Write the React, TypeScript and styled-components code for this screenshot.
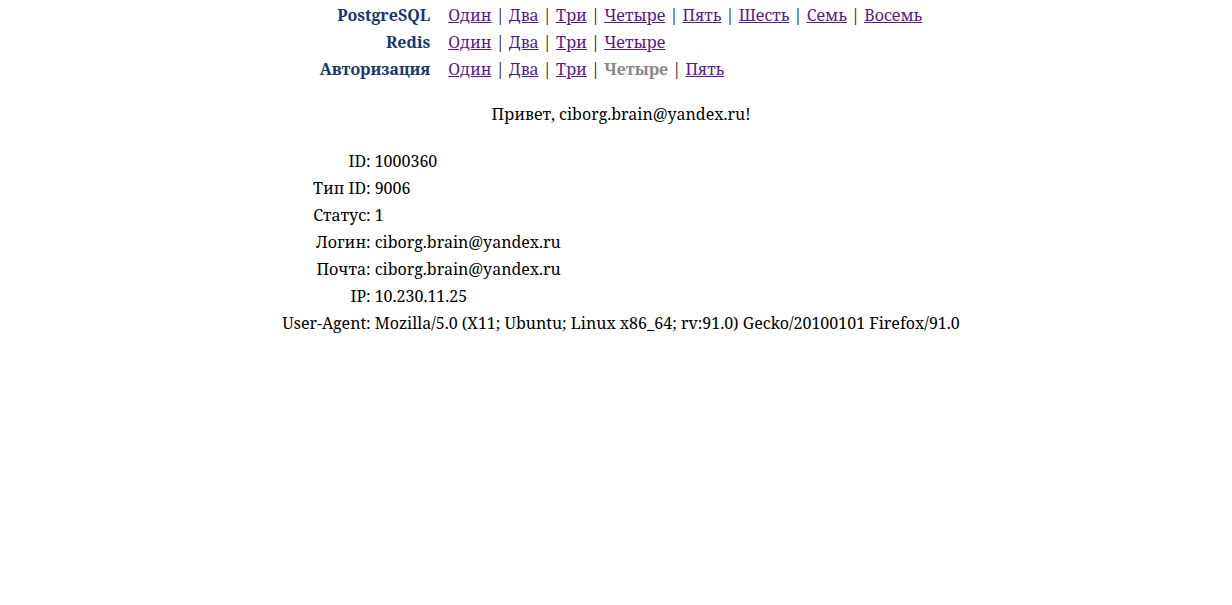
import { Fragment } from 'react'
import styled, { createGlobalStyle } from 'styled-components'

// ── Global ─────────────────────────────────────────────────────────────────────

const GlobalStyle = createGlobalStyle`
  html, body {
    margin: 0;
    padding: 0;
    background: #ffffff;
  }
  body {
    font-family: "Noto Serif", "DejaVu Serif", "Liberation Serif", serif;
    font-size: 16px;
    color: #000000;
  }
`

const Page = styled.div`
  padding: 1px 0 0 10px;
  display: flex;
  flex-direction: column;
  align-items: center;
`

// ── Nav ────────────────────────────────────────────────────────────────────────

const NavGrid = styled.div`
  display: grid;
  grid-template-columns: auto auto;
  column-gap: 18px;
  grid-auto-rows: 27px;
  align-items: center;
`

const NavLabel = styled.div`
  text-align: right;
  font-weight: bold;
  color: #18366f;
`

const NavLinks = styled.div`
  white-space: nowrap;
`

const NavLink = styled.a`
  color: #551a8b;
  text-decoration: underline;
`

const Current = styled.span`
  color: #888888;
  font-weight: bold;
`

const Sep = styled.span`
  color: #222222;
  padding: 0 4.2px;
`

// ── Greeting ───────────────────────────────────────────────────────────────────

const Greeting = styled.p`
  margin: 19px 0 19px;
  line-height: 27px;
  text-align: center;
`

// ── Info ───────────────────────────────────────────────────────────────────────

const InfoGrid = styled.div`
  display: grid;
  grid-template-columns: auto auto;
  column-gap: 4px;
  grid-auto-rows: 27px;
  align-items: center;
`

const InfoLabel = styled.div`
  text-align: right;
`

const InfoValue = styled.div`
  white-space: nowrap;
`

// ── Data ───────────────────────────────────────────────────────────────────────

const NAV = [
  { label: 'PostgreSQL', links: ['Один', 'Два', 'Три', 'Четыре', 'Пять', 'Шесть', 'Семь', 'Восемь'], current: -1 },
  { label: 'Redis', links: ['Один', 'Два', 'Три', 'Четыре'], current: -1 },
  { label: 'Авторизация', links: ['Один', 'Два', 'Три', 'Четыре', 'Пять'], current: 3 },
]

const INFO = [
  ['ID:', '1000360'],
  ['Тип ID:', '9006'],
  ['Статус:', '1'],
  ['Логин:', 'ciborg.brain@yandex.ru'],
  ['Почта:', 'ciborg.brain@yandex.ru'],
  ['IP:', '10.230.11.25'],
  ['User-Agent:', 'Mozilla/5.0 (X11; Ubuntu; Linux x86_64; rv:91.0) Gecko/20100101 Firefox/91.0'],
]

// ── Page ───────────────────────────────────────────────────────────────────────

export default function App() {
  return (
    <>
      <GlobalStyle />
      <Page>
        <NavGrid>
          {NAV.map(row => (
            <Fragment key={row.label}>
              <NavLabel>{row.label}</NavLabel>
              <NavLinks>
                {row.links.map((l, i) => (
                  <span key={l}>
                    {i > 0 && <Sep>|</Sep>}
                    {i === row.current ? <Current>{l}</Current> : <NavLink href="#">{l}</NavLink>}
                  </span>
                ))}
              </NavLinks>
            </Fragment>
          ))}
        </NavGrid>

        <Greeting>Привет, ciborg.brain@yandex.ru!</Greeting>

        <InfoGrid>
          {INFO.map(([k, v]) => (
            <Fragment key={k}>
              <InfoLabel>{k}</InfoLabel>
              <InfoValue>{v}</InfoValue>
            </Fragment>
          ))}
        </InfoGrid>
      </Page>
    </>
  )
}
